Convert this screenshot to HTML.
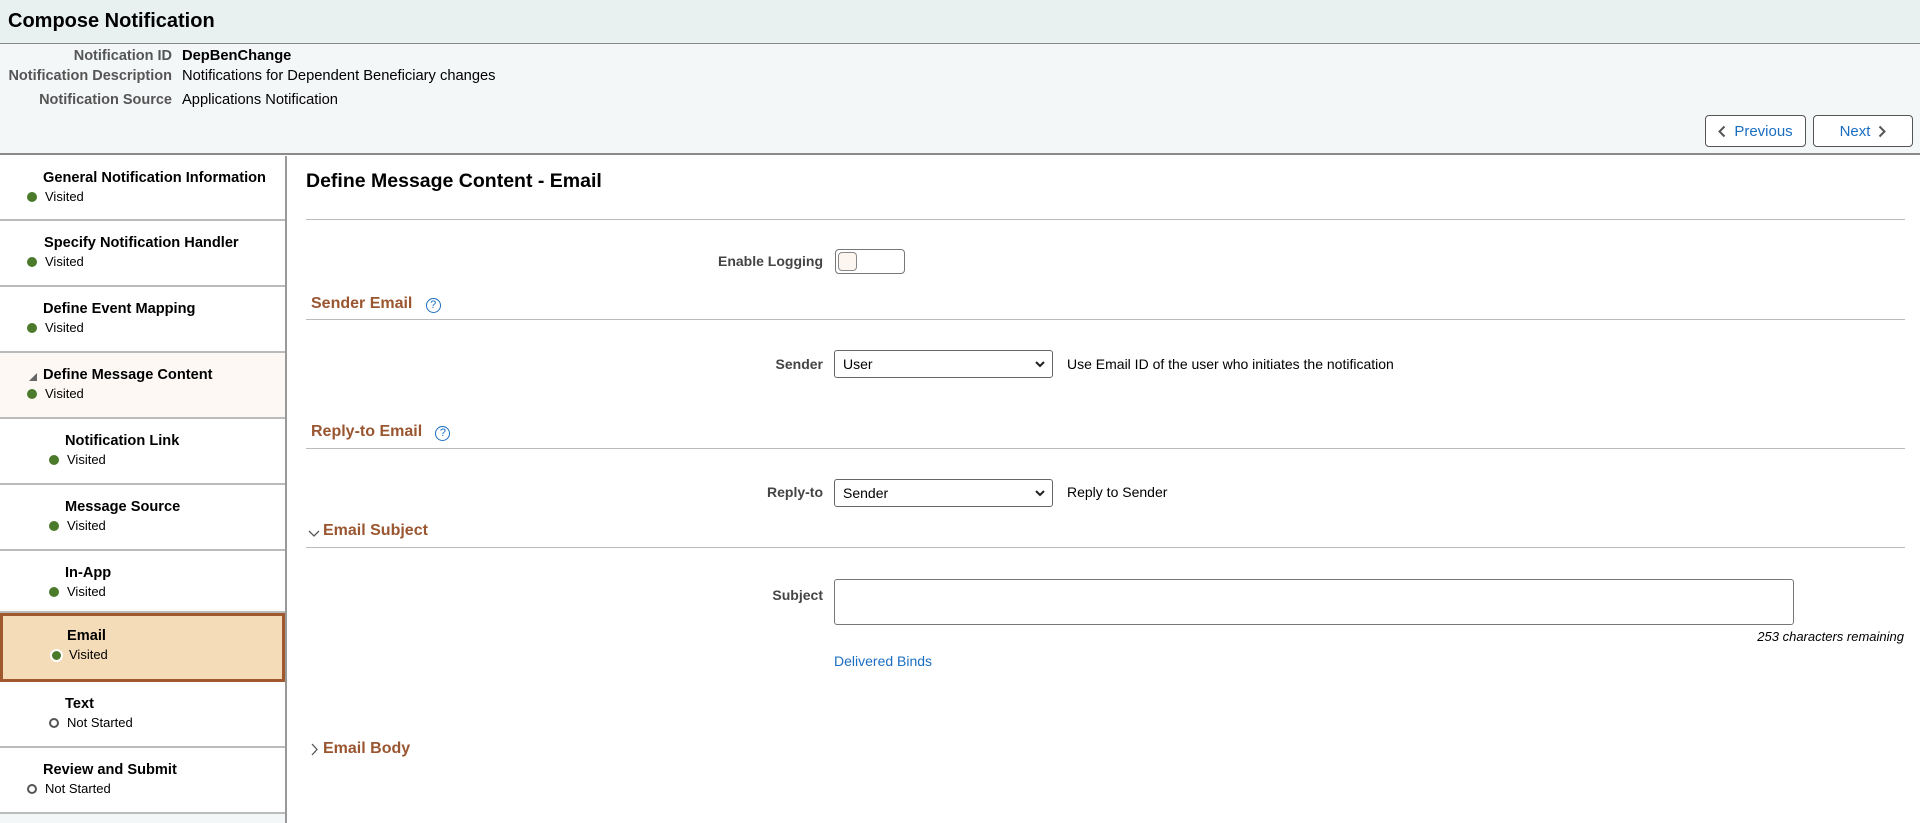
<!DOCTYPE html>
<html><head><meta charset="utf-8"><style>
*{box-sizing:border-box;margin:0;padding:0}
body{width:1920px;height:823px;overflow:hidden;font-family:"Liberation Sans",Arial,sans-serif;background:#fff;position:relative;color:#000}
.a{position:absolute;white-space:nowrap}
.hd{left:0;top:0;width:1920px;height:44px;background:#e8f0f0;border-bottom:1px solid #888}
.info{left:0;top:44px;width:1920px;height:111px;background:#f4f7f8;border-bottom:2px solid #8a8a8a}
.lab{font-size:14.5px;color:#555;font-weight:bold;text-align:right;width:172px;left:0}
.val{font-size:14.7px;left:182px}
.btn{height:32px;border:1px solid #555;border-radius:4px;background:#fff;color:#1a6ec1;font-size:15px;display:flex;align-items:center;justify-content:center;gap:8px}
.side{left:0;top:156px;width:287px;height:667px;border-right:2px solid #999;background:#f4f7f8}
.it{position:absolute;left:0;width:285px;background:#fff;border-bottom:2px solid #bbb}
.it b{position:absolute;font-size:14.6px;top:14px}
.it span{position:absolute;font-size:13px;top:33px}
.dot{position:absolute;width:10px;height:10px;border-radius:50%;background:#4a7a2a;top:36px}
.od{background:#fff;border:2px solid #555}
.sec{font-size:16px;font-weight:bold;color:#9a5630}
.ln{height:1px;background:#bbb;left:306px;width:1599px}
.fl{font-size:14px;font-weight:bold;color:#444;text-align:right;width:200px;left:623px}
.sel{left:834px;width:219px;height:28px;border:1px solid #666;border-radius:3px;font-size:14px;padding:5px 8px}
.sel svg{position:absolute;right:7px;top:10px}
.q{display:inline-block;width:15px;height:15px;border:1.5px solid #1a6ec1;border-radius:50%;color:#1a6ec1;font-size:11px;text-align:center;line-height:12px;font-weight:normal}
</style></head><body>
<div class="a hd"></div>
<div class="a" style="left:8px;top:10px;font-size:20px;font-weight:bold">Compose Notification</div>
<div class="a info"></div>
<div class="a lab" style="top:48px">Notification ID</div><div class="a val" style="top:48px;font-weight:bold">DepBenChange</div>
<div class="a lab" style="top:68px">Notification Description</div><div class="a val" style="top:68px">Notifications for Dependent Beneficiary changes</div>
<div class="a lab" style="top:92px">Notification Source</div><div class="a val" style="top:92px">Applications Notification</div>
<div class="a btn" style="left:1705px;top:115px;width:101px"><svg width="8" height="13" viewBox="0 0 8 13"><path d="M6.5 1.5L1.5 6.5l5 5" fill="none" stroke="#555" stroke-width="2"/></svg>Previous</div>
<div class="a btn" style="left:1813px;top:115px;width:100px">Next<svg width="8" height="13" viewBox="0 0 8 13"><path d="M1.5 1.5l5 5-5 5" fill="none" stroke="#555" stroke-width="2"/></svg></div>

<div class="a side">
<div class="it" style="top:0;height:65px"><b style="left:43px">General Notification Information</b><i class="dot" style="left:27px"></i><span style="left:45px">Visited</span></div>
<div class="it" style="top:65px;height:66px"><b style="left:44px">Specify Notification Handler</b><i class="dot" style="left:27px"></i><span style="left:45px">Visited</span></div>
<div class="it" style="top:131px;height:66px"><b style="left:43px">Define Event Mapping</b><i class="dot" style="left:27px"></i><span style="left:45px">Visited</span></div>
<div class="it" style="top:197px;height:66px;background:#fdf8f3"><svg style="position:absolute;left:29px;top:20px" width="8" height="8"><path d="M8 0V8H0Z" fill="#666"/></svg><b style="left:43px">Define Message Content</b><i class="dot" style="left:27px"></i><span style="left:45px">Visited</span></div>
<div class="it" style="top:263px;height:66px"><b style="left:65px">Notification Link</b><i class="dot" style="left:49px"></i><span style="left:67px">Visited</span></div>
<div class="it" style="top:329px;height:66px"><b style="left:65px">Message Source</b><i class="dot" style="left:49px"></i><span style="left:67px">Visited</span></div>
<div class="it" style="top:395px;height:62px"><b style="left:65px">In-App</b><i class="dot" style="left:49px"></i><span style="left:67px">Visited</span></div>
<div class="it" style="top:457px;height:69px;background:#f5dcb9;border:3px solid #a0582f"><b style="left:64px;top:12px">Email</b><i class="dot" style="left:47px;top:33px;border:2px solid #fff;width:13px;height:13px"></i><span style="left:66px;top:31px">Visited</span></div>
<div class="it" style="top:526px;height:66px"><b style="left:65px">Text</b><i class="dot od" style="left:49px"></i><span style="left:67px">Not Started</span></div>
<div class="it" style="top:592px;height:66px"><b style="left:43px">Review and Submit</b><i class="dot od" style="left:27px"></i><span style="left:45px">Not Started</span></div>
</div>

<div class="a" style="left:306px;top:170px;font-size:19.5px;font-weight:bold">Define Message Content - Email</div>
<div class="a ln" style="top:219px"></div>
<div class="a fl" style="top:253px">Enable Logging</div>
<div class="a" style="left:835px;top:249px;width:70px;height:25px;border:1px solid #777;border-radius:4px"><div style="position:absolute;left:2px;top:2px;width:19px;height:19px;border:1px solid #888;border-radius:4px;background:#fdf6f0"></div></div>
<div class="a sec" style="left:311px;top:295px">Sender Email &nbsp;&nbsp;<span class="q">?</span></div>
<div class="a ln" style="top:319px"></div>
<div class="a fl" style="top:356px">Sender</div>
<div class="a sel" style="top:350px">User<svg width="10" height="7"><path d="M1 1l4 4 4-4" fill="none" stroke="#222" stroke-width="2"/></svg></div>
<div class="a" style="left:1067px;top:356px;font-size:14px">Use Email ID of the user who initiates the notification</div>
<div class="a sec" style="left:311px;top:423px">Reply-to Email &nbsp;&nbsp;<span class="q">?</span></div>
<div class="a ln" style="top:448px"></div>
<div class="a fl" style="top:484px">Reply-to</div>
<div class="a sel" style="top:479px">Sender<svg width="10" height="7"><path d="M1 1l4 4 4-4" fill="none" stroke="#222" stroke-width="2"/></svg></div>
<div class="a" style="left:1067px;top:484px;font-size:14px">Reply to Sender</div>
<svg class="a" style="left:308px;top:530px" width="12" height="8"><path d="M1 1l5 5 5-5" fill="none" stroke="#555" stroke-width="1.3"/></svg>
<div class="a sec" style="left:323px;top:522px">Email Subject</div>
<div class="a ln" style="top:547px"></div>
<div class="a fl" style="top:587px">Subject</div>
<div class="a" style="left:834px;top:579px;width:960px;height:46px;border:1px solid #777;border-radius:3px"></div>
<div class="a" style="left:1700px;top:629px;width:204px;text-align:right;font-size:13px;font-style:italic">253 characters remaining</div>
<div class="a" style="left:834px;top:653px;font-size:14px;color:#1a6ec1">Delivered Binds</div>
<svg class="a" style="left:311px;top:743px" width="8" height="13"><path d="M1 1l5 5.5-5 5.5" fill="none" stroke="#555" stroke-width="1.3"/></svg>
<div class="a sec" style="left:323px;top:740px">Email Body</div>
</body></html>
